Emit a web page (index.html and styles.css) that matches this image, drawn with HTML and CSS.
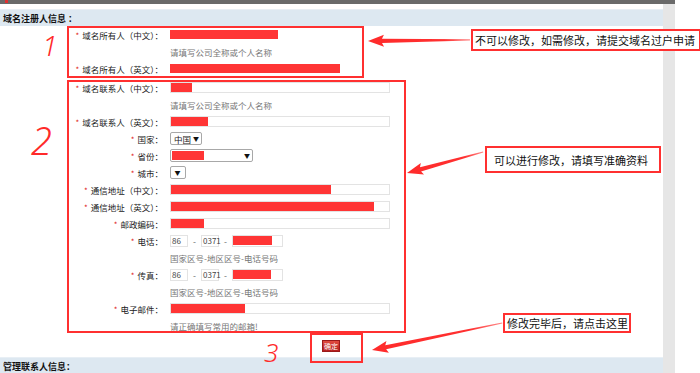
FILE: index.html
```html
<!DOCTYPE html>
<html lang="zh-CN">
<head>
    <meta charset="utf-8">
    <title>域名注册人信息</title>
    <link rel="stylesheet" href="styles.css">
</head>
<body>
    <div class="page">
        <div class="topbar"><span class="topbar-icon"></span></div>
        <div class="frame">
            <div class="main">
                <div class="sec-title">域名注册人信息 ：</div>

                <div class="group">
                    <div class="row">
                        <div class="label"><span class="star">*</span>域名所有人（中文）：</div>
                        <div class="plain"><span class="mask" style="width:108px"></span></div>
                    </div>
                    <div class="row hint">请填写公司全称或个人名称</div>
                    <div class="row">
                        <div class="label"><span class="star">*</span>域名所有人（英文）：</div>
                        <div class="plain"><span class="mask" style="width:170px"></span></div>
                    </div>
                </div>

                <div class="group group-edit">
                    <div class="row">
                        <div class="label"><span class="star">*</span>域名联系人（中文）：</div>
                        <div class="field"><span class="mask" style="width:21px"></span></div>
                    </div>
                    <div class="row hint">请填写公司全称或个人名称</div>
                    <div class="row">
                        <div class="label"><span class="star">*</span>域名联系人（英文）：</div>
                        <div class="field"><span class="mask" style="width:37px"></span></div>
                    </div>
                    <div class="row">
                        <div class="label"><span class="star">*</span>国家：</div>
                        <div class="select select-country"><span class="select-text">中国</span><span class="caret">▼</span></div>
                    </div>
                    <div class="row">
                        <div class="label"><span class="star">*</span>省份：</div>
                        <div class="select select-province"><span class="mask" style="width:32px"></span><span class="caret">▼</span></div>
                    </div>
                    <div class="row">
                        <div class="label"><span class="star">*</span>城市：</div>
                        <div class="select select-city"><span class="caret">▼</span></div>
                    </div>
                    <div class="row">
                        <div class="label"><span class="star">*</span>通信地址（中文）：</div>
                        <div class="field"><span class="mask" style="width:160px"></span></div>
                    </div>
                    <div class="row">
                        <div class="label"><span class="star">*</span>通信地址（英文）：</div>
                        <div class="field"><span class="mask" style="width:203px"></span></div>
                    </div>
                    <div class="row">
                        <div class="label"><span class="star">*</span>邮政编码：</div>
                        <div class="field"><span class="mask" style="width:33px"></span></div>
                    </div>
                    <div class="row">
                        <div class="label"><span class="star">*</span>电话：</div>
                        <div class="phone">
                            <span class="box box-cc">86</span>
                            <span class="dash">-</span>
                            <span class="box box-area">0371</span>
                            <span class="dash">-</span>
                            <span class="box box-num"><span class="mask" style="width:39px"></span></span>
                        </div>
                    </div>
                    <div class="row hint">国家区号-地区区号-电话号码</div>
                    <div class="row">
                        <div class="label"><span class="star">*</span>传真：</div>
                        <div class="phone">
                            <span class="box box-cc">86</span>
                            <span class="dash">-</span>
                            <span class="box box-area">0371</span>
                            <span class="dash">-</span>
                            <span class="box box-num"><span class="mask" style="width:38px"></span></span>
                        </div>
                    </div>
                    <div class="row hint">国家区号-地区区号-电话号码</div>
                    <div class="row">
                        <div class="label"><span class="star">*</span>电子邮件：</div>
                        <div class="field"><span class="mask" style="width:74px"></span></div>
                    </div>
                    <div class="row hint">请正确填写常用的邮箱!</div>
                </div>

                <div class="submit-row">
                    <button class="submit">确定</button>
                </div>

                <div class="sec-title">管理联系人信息：</div>
            </div>
            <div class="gutter"></div>
        </div>

        <!-- annotations drawn over the screenshot -->
        <div class="mark mark-1"></div>
        <div class="mark mark-2"></div>
        <div class="mark mark-3"></div>

        <div class="note note-1">不可以修改，如需修改，请提交域名过户申请</div>
        <div class="note note-2">可以进行修改，请填写准确资料</div>
        <div class="note note-3">修改完毕后，请点击这里</div>

        <svg class="arrows" width="700" height="373" viewBox="0 0 700 373">
            <defs>
                <linearGradient id="fade" x1="0" y1="0" x2="1" y2="0">
                    <stop offset="0" stop-color="#ff2b2b"/>
                    <stop offset="0.75" stop-color="#ff3030"/>
                    <stop offset="1" stop-color="#ff8a8a"/>
                </linearGradient>
            </defs>
            <g transform="translate(368 41) rotate(-0.6)">
                <polygon points="0,0 16,-6 14,-2 102,-0.6 102,0.6 14,2.2 16,6" fill="url(#fade)"/>
            </g>
            <g transform="translate(407 173) rotate(-15.4)">
                <polygon points="0,0 16,-6 14,-2 79,-0.6 79,0.6 14,2.2 16,6" fill="url(#fade)"/>
            </g>
            <g transform="translate(372 350) rotate(-11.7)">
                <polygon points="0,0 16,-6 14,-2 133,-0.6 133,0.6 14,2.2 16,6" fill="url(#fade)"/>
            </g>
            <text class="hand" x="42" y="56" font-size="28">1</text>
            <text class="hand" x="31" y="155" font-size="38">2</text>
            <text class="hand" x="264" y="362" font-size="26">3</text>
        </svg>
    </div>
</body>
</html>
```

FILE: styles.css
```css
*{
    margin: 0;
    padding: 0;
    box-sizing: border-box;
}
body{
    font-family: "Noto Sans CJK SC", sans-serif;
    font-size: 8.5px;
    color: #222;
    background-color: white;
}
.page{
    position: relative;
    width: 700px;
    height: 373px;
    overflow: hidden;
}
.topbar{
    width: 675px;
    height: 4px;
    background-color: #6a6a6a;
    position: relative;
}
.topbar-icon{
    display: block;
    width: 3px;
    height: 3px;
    margin-left: 5px;
    background-color: #e03030;
}
.frame{
    display: flex;
    height: 369px;
}
.main{
    width: 663px;
    padding-top: 5px;
}
.gutter{
    width: 12px;
    background-color: #e6e6e6;
}
.sec-title{
    height: 17px;
    line-height: 17px;
    padding-left: 3px;
    background-color: #dde8f1;
    border-top: 1px solid #e8eff5;
    font-size: 9px;
    font-weight: bold;
    color: #111;
}
.group-edit{
    margin-top: 2px;
}
.row{
    display: flex;
    align-items: center;
    height: 17px;
}
.label{
    width: 163px;
    text-align: right;
    margin-right: 7px;
    white-space: nowrap;
}
.star{
    color: #e02020;
    margin-right: 3px;
    font-size: 8px;
}
.hint{
    padding-left: 170px;
    color: #777;
}
.mask{
    display: block;
    height: 9px;
    background-color: #ff3535;
}
.plain{
    display: flex;
    align-items: center;
}
.field{
    width: 220px;
    height: 11px;
    border: 1px solid #e3e3e3;
    display: flex;
    align-items: center;
}
.select{
    height: 13px;
    border: 1px solid #a8a8a8;
    border-radius: 2px;
    display: flex;
    align-items: center;
    padding: 0 2px 0 1px;
    background-color: white;
}
.select-country{
    width: 32px;
}
.select-province{
    width: 83px;
}
.select-city{
    width: 16px;
    justify-content: center;
}
.select-text{
    font-size: 8.5px;
    color: #222;
    margin-left: 2px;
}
.caret{
    margin-left: auto;
    font-size: 6px;
    color: #111;
}
.select-city .caret{
    margin-left: 0;
}
.phone{
    display: flex;
    align-items: center;
}
.box{
    height: 12px;
    border: 1px solid #e3e3e3;
    display: flex;
    align-items: center;
    padding-left: 1px;
    font-size: 8px;
    color: #444;
}
.box-cc{
    width: 18px;
}
.box-area{
    width: 18px;
}
.box-num{
    width: 51px;
    padding-left: 0;
}
.dash{
    width: 13px;
    text-align: center;
    color: #666;
}
.submit-row{
    height: 23px;
    display: flex;
    align-items: center;
    padding-left: 322px;
}
.submit{
    width: 18px;
    height: 12px;
    border: 1px solid #9a1a1a;
    background: linear-gradient(#e04a40, #b51d1d);
    color: white;
    font-family: "Noto Sans CJK SC", sans-serif;
    font-size: 7px;
    line-height: 10px;
    cursor: pointer;
}

/* annotation overlay */
.mark{
    position: absolute;
    border: 2px solid #ff3030;
}
.mark-1{
    left: 67px;
    top: 26px;
    width: 297px;
    height: 52px;
}
.mark-2{
    left: 67px;
    top: 80px;
    width: 339px;
    height: 253px;
}
.mark-3{
    left: 310px;
    top: 333px;
    width: 53px;
    height: 30px;
}
.note{
    position: absolute;
    border: 2px solid #ff3030;
    background-color: white;
    color: #111;
    font-size: 11px;
    white-space: nowrap;
    display: flex;
    align-items: center;
}
.note-1{
    left: 471px;
    top: 29px;
    width: 230px;
    height: 22px;
    padding-left: 2px;
}
.note-2{
    left: 485px;
    top: 146px;
    width: 176px;
    height: 27px;
    padding-left: 7px;
}
.note-3{
    left: 503px;
    top: 313px;
    width: 128px;
    height: 20px;
    padding-left: 2px;
}
.arrows{
    position: absolute;
    left: 0;
    top: 0;
    pointer-events: none;
}
.hand{
    fill: #ff2a2a;
    font-family: "Noto Sans", sans-serif;
    font-style: italic;
    font-weight: 300;
}
```
